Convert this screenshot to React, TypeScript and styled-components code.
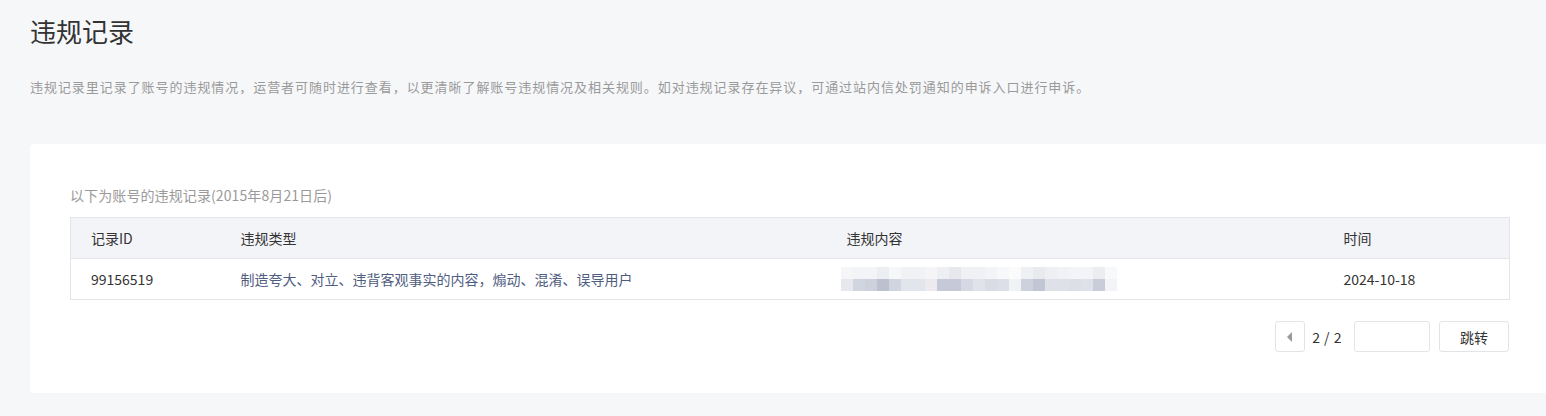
import React from "react";
import styled, { createGlobalStyle } from "styled-components";

const GlobalStyle = createGlobalStyle`
  html, body {
    margin: 0;
    padding: 0;
    background: #f6f7f9;
    overflow: hidden;
  }
  body {
    font-family: "Noto Sans CJK SC", "Noto Sans", sans-serif;
    color: #333;
  }
`;

const Page = styled.div`
  width: 1549px;
  padding: 13px 0 24px 30px;
  box-sizing: border-box;
`;

const Title = styled.h1`
  margin: 0;
  font-size: 26px;
  line-height: 36px;
  font-weight: 400;
  color: #333;
`;

const Desc = styled.p`
  margin: 28px 0 0;
  font-size: 13px;
  letter-spacing: 0.95px;
  line-height: 20px;
  color: #9a9a9a;
`;

const Card = styled.section`
  margin-top: 47px;
  background: #fff;
  border-radius: 4px;
  padding: 41px 40px 41px 40px;
`;

const Caption = styled.div`
  font-size: 14px;
  line-height: 20px;
  color: #9a9a9a;
  letter-spacing: 0.1px;
`;

const Table = styled.table`
  margin-top: 12px;
  width: 1439px;
  border-collapse: collapse;
  table-layout: fixed;
  border: 1px solid #e4e5e8;
`;

const HeadCell = styled.th`
  background: #f3f4f8;
  text-align: left;
  font-weight: 400;
  font-size: 14px;
  color: #333;
  height: 40px;
  padding: 0 0 0 20px;
  border-bottom: 1px solid #e4e5e8;
`;

const Cell = styled.td<{ $tone?: "type" | "plain" }>`
  font-size: 14px;
  height: 40px;
  padding: 0 0 0 20px;
  color: ${(p) => (p.$tone === "type" ? "#4f5d80" : "#333")};
  vertical-align: middle;
`;

const Mosaic = styled.div`
  display: grid;
  grid-template-columns: repeat(23, 12px);
  grid-auto-rows: 12px;
  margin-left: -6px;
`;

const Tile = styled.span`
  display: block;
`;

const Pager = styled.div`
  margin-top: 21px;
  display: flex;
  justify-content: flex-end;
  align-items: center;
  width: 1439px;
`;

const PrevButton = styled.button`
  width: 30px;
  height: 31px;
  box-sizing: border-box;
  border: 1px solid #e3e4e6;
  border-radius: 3px;
  background: #fff;
  display: flex;
  align-items: center;
  justify-content: center;
  padding: 0;
`;

const Arrow = styled.span`
  width: 0;
  height: 0;
  border-top: 5px solid transparent;
  border-bottom: 5px solid transparent;
  border-right: 5px solid #9a9a9a;
  margin-left: -1px;
`;

const PageNum = styled.span`
  font-size: 14px;
  color: #333;
  margin: 0 12px 0 7px;
  letter-spacing: 0.5px;
`;

const JumpInput = styled.input`
  width: 76px;
  height: 31px;
  box-sizing: border-box;
  border: 1px solid #e3e4e6;
  border-radius: 3px;
  outline: none;
  font-family: inherit;
`;

const JumpButton = styled.button`
  margin-left: 9px;
  width: 70px;
  height: 31px;
  box-sizing: border-box;
  border: 1px solid #e3e4e6;
  border-radius: 3px;
  background: #fff;
  font-family: inherit;
  font-size: 14px;
  color: #333;
  padding: 0;
`;

const topRow = [
  "#f6f6f8", "#f3f4f7", "#f3f4f7", "#eceef2", "#f6f7f9", "#f1f2f5", "#f1f2f5", "#f5f5f7",
  "#eeeff3", "#e6e8ee", "#f0f1f4", "#f0f1f4", "#f3f4f7", "#f7f8fa", "#fbfbfc", "#eef0f4",
  "#e8eaf0", "#eeeff3", "#f1f2f5", "#f3f4f7", "#f3f4f7", "#ecedf1", "#f8f9fb",
];
const bottomRow = [
  "#e7e8ee", "#d1d5e0", "#cdd1dc", "#bcc1cf", "#d1d5e0", "#e3e5ec", "#e3e5ec", "#eceaee",
  "#c6cad8", "#c6cad8", "#d6d9e3", "#e1e3ea", "#d9dce5", "#dcdfe8", "#f1f2f5", "#cdd1dc",
  "#c1c6d4", "#dfe1e9", "#dfe1e9", "#dedee6", "#dfe1e9", "#c9cdda", "#f3f4f8",
];

export default function App() {
  return (
    <>
      <GlobalStyle />
      <Page>
        <Title>违规记录</Title>
        <Desc>
          违规记录里记录了账号的违规情况，运营者可随时进行查看，以更清晰了解账号违规情况及相关规则。如对违规记录存在异议，可通过站内信处罚通知的申诉入口进行申诉。
        </Desc>
        <Card>
          <Caption>以下为账号的违规记录(2015年8月21日后)</Caption>
          <Table>
            <colgroup>
              <col style={{ width: 150 }} />
              <col style={{ width: 606 }} />
              <col style={{ width: 497 }} />
              <col style={{ width: 186 }} />
            </colgroup>
            <thead>
              <tr>
                <HeadCell>记录ID</HeadCell>
                <HeadCell>违规类型</HeadCell>
                <HeadCell>违规内容</HeadCell>
                <HeadCell>时间</HeadCell>
              </tr>
            </thead>
            <tbody>
              <tr>
                <Cell>99156519</Cell>
                <Cell $tone="type">制造夸大、对立、违背客观事实的内容，煽动、混淆、误导用户</Cell>
                <Cell>
                  <Mosaic>
                    {[...topRow, ...bottomRow].map((c, i) => (
                      <Tile key={i} style={{ background: c }} />
                    ))}
                  </Mosaic>
                </Cell>
                <Cell>2024-10-18</Cell>
              </tr>
            </tbody>
          </Table>
          <Pager>
            <PrevButton aria-label="上一页">
              <Arrow />
            </PrevButton>
            <PageNum>2 / 2</PageNum>
            <JumpInput />
            <JumpButton>跳转</JumpButton>
          </Pager>
        </Card>
      </Page>
    </>
  );
}
